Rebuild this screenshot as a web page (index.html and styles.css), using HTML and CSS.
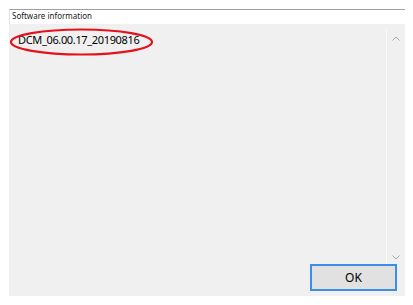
FILE: index.html
```html
<!DOCTYPE html>
<html lang="en">
  <head>
    <meta charset="UTF-8" />
    <meta name="viewport" content="width=device-width, initial-scale=1.0" />
    <title>Software information</title>
    <link rel="stylesheet" href="styles.css">
  </head>
  <body>
    <div class="dialog">
      <div class="group">
        <div class="group-title">Software information</div>
        <div class="panel">
          <div class="textbox">
            <div class="content">
              <span class="version">DCM_06.00.17_20190816</span>
              <svg class="mark" viewBox="0 0 146 28" xmlns="http://www.w3.org/2000/svg">
                <ellipse cx="72.5" cy="14" rx="70.5" ry="12.5" fill="none" stroke="#e3121b" stroke-width="2.2" />
              </svg>
            </div>
            <div class="scrollbar">
              <svg class="arrow" viewBox="0 0 8 5" xmlns="http://www.w3.org/2000/svg">
                <polyline points="0.5,4.5 4,1 7.5,4.5" fill="none" stroke="#a6a6a6" stroke-width="1" />
              </svg>
              <svg class="arrow" viewBox="0 0 8 5" xmlns="http://www.w3.org/2000/svg">
                <polyline points="0.5,0.5 4,4 7.5,0.5" fill="none" stroke="#a6a6a6" stroke-width="1" />
              </svg>
            </div>
          </div>
          <div class="buttons">
            <button class="ok">OK</button>
          </div>
        </div>
      </div>
    </div>
  </body>
</html>
```

FILE: styles.css
```css
body {
  margin: 0;
  background: #ffffff;
  font-family: "Noto Sans", "Open Sans", sans-serif;
  color: #000000;
}

.dialog {
  width: 413px;
  height: 305px;
  padding: 9px 9px 0 9px;
  box-sizing: border-box;
}

.group {
  width: 395px;
  border-top: 1px solid #a0a0a0;
  border-left: 1px solid #e3e3e3;
}

.group-title {
  height: 14px;
  font-size: 8px;
  line-height: 12px;
  padding-left: 2px;
  color: #1a1a1a;
}

.panel {
  background: #f0f0f0;
  height: 272px;
  margin-left: -1px;
  display: flex;
  flex-direction: column;
}

.textbox {
  display: flex;
  height: 240px;
}

.content {
  flex: 1;
  position: relative;
  padding: 9px 0 0 9px;
  font-size: 11px;
  line-height: 14px;
}

.version {
  letter-spacing: -0.35px;
}

.mark {
  position: absolute;
  left: 0;
  top: 4px;
  width: 146px;
  height: 28px;
}

.scrollbar {
  width: 17px;
  margin: 6px 1px 0 0;
  border-left: 1px solid #fafafa;
  display: flex;
  flex-direction: column;
  justify-content: space-between;
  align-items: center;
  padding: 6px 0 4px 0;
}

.arrow {
  width: 8px;
  height: 5px;
}

.buttons {
  display: flex;
  justify-content: flex-end;
  padding-right: 8px;
}

.ok {
  width: 87px;
  height: 27px;
  background: #e1e1e1;
  border: 2px solid #3d8ee6;
  font-family: inherit;
  font-size: 12px;
  color: #000000;
  padding: 0;
}
```
